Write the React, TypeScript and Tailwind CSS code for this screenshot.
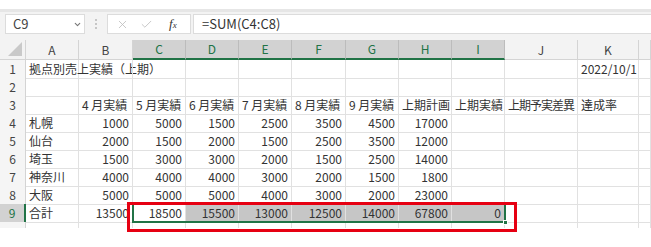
import { ChevronDown, Check, X } from "lucide-react";

const font = { fontFamily: '"Noto Sans CJK JP", "Liberation Sans", sans-serif' };

const cols = ["A", "B", "C", "D", "E", "F", "G", "H", "I", "J", "K", ""];
const selectedCols = ["C", "D", "E", "F", "G", "H", "I"];

type Row = { n: number; cells: (string | number)[] };

const rows: Row[] = [
  { n: 1, cells: ["拠点別売上実績（上期）", "", "", "", "", "", "", "", "", "", "2022/10/1", ""] },
  { n: 2, cells: ["", "", "", "", "", "", "", "", "", "", "", ""] },
  {
    n: 3,
    cells: ["", "4 月実績", "5 月実績", "6 月実績", "7 月実績", "8 月実績", "9 月実績", "上期計画", "上期実績", "上期予実差異", "達成率", ""],
  },
  { n: 4, cells: ["札幌", 1000, 5000, 1500, 2500, 3500, 4500, 17000, "", "", "", ""] },
  { n: 5, cells: ["仙台", 2000, 1500, 2000, 1500, 2500, 3500, 12000, "", "", "", ""] },
  { n: 6, cells: ["埼玉", 1500, 3000, 3000, 2000, 1500, 2500, 14000, "", "", "", ""] },
  { n: 7, cells: ["神奈川", 4000, 4000, 4000, 3000, 2000, 1500, 1800, "", "", "", ""] },
  { n: 8, cells: ["大阪", 5000, 5000, 5000, 4000, 3000, 2000, 23000, "", "", "", ""] },
  { n: 9, cells: ["合計", 13500, 18500, 15500, 13000, 12500, 14000, 67800, 0, "", "", ""] },
];

const gridCols = "grid-cols-[26px_53px_54px_53px_53px_53px_54px_53px_53px_53px_73px_61px_1fr]";

export default function App() {
  return (
    <div className="w-[651px] h-[247px] bg-white overflow-hidden text-[#333]" style={font}>
      {/* formula bar */}
      <div className="h-[9px] bg-white" />
      <div className="h-[3px] bg-[#e6e6e6]" />
      <div className="bg-[#f3f3f3] h-[28px] pt-[2px] flex items-start">
        <div className="ml-[5px] w-[80px] h-[20px] bg-white border border-[#dcdcdc] flex items-center pl-[7px] pr-[2px] text-[13px] text-[#444]">
          <span className="flex-1">C9</span>
          <ChevronDown className="w-[9px] h-[9px] text-[#777]" strokeWidth={3} />
        </div>
        <div className="w-[22px] h-[20px] flex flex-col items-center justify-center gap-[2px]">
          <span className="w-[2px] h-[2px] bg-[#c6c6c6]" />
          <span className="w-[2px] h-[2px] bg-[#c6c6c6]" />
          <span className="w-[2px] h-[2px] bg-[#c6c6c6]" />
        </div>
        <div className="w-[84px] h-[20px] bg-white border border-[#dcdcdc] flex items-center pl-[8px] gap-[11px] text-[#bdbdbd]">
          <X className="w-[13px] h-[13px]" strokeWidth={1.5} />
          <Check className="w-[13px] h-[13px]" strokeWidth={1.5} />
          <span className="ml-[5px] text-[#333] text-[13px] italic" style={{ fontFamily: '"Liberation Serif", serif' }}>
            f<span className="text-[9px]">x</span>
          </span>
        </div>
        <div className="ml-[2px] flex-1 h-[20px] bg-white border border-[#dcdcdc] border-r-0 flex items-center pl-[8px] text-[13px] text-[#333]">
          =SUM(C4:C8)
        </div>
      </div>

      {/* sheet */}
      <div className="relative">
        <div className={`grid ${gridCols} h-[20px] bg-[#f3f3f3]`}>
          <div className="relative border-r border-b border-[#d4d4d4]">
            <div
              className="absolute right-[3px] bottom-[3px] w-[14px] h-[14px] bg-[#c9c9c9]"
              style={{ clipPath: "polygon(100% 0, 100% 100%, 0 100%)" }}
            />
          </div>
          {cols.map((c, i) => {
            const sel = selectedCols.includes(c);
            return (
              <div
                key={i}
                className={
                  sel
                    ? "bg-[#d2d2d2] border-r border-[#bcbcbc] border-b-2 border-b-[#217346] text-[#217346] flex items-center justify-center text-[12px]"
                    : "border-r border-b border-[#d4d4d4] text-[#444] flex items-center justify-center text-[12px]"
                }
              >
                {c}
              </div>
            );
          })}
        </div>

        {rows.map((r) => (
          <div key={r.n} className={`grid ${gridCols} h-[18px]`}>
            <div
              className={
                r.n === 9
                  ? "bg-[#d2d2d2] border-r-2 border-r-[#217346] border-b border-[#bcbcbc] text-[#217346] flex items-center justify-center text-[12px]"
                  : "bg-[#f5f5f5] border-r border-b border-[#d4d4d4] text-[#444] flex items-center justify-center text-[12px]"
              }
            >
              {r.n}
            </div>
            {r.cells.map((v, i) => {
              const isNum = typeof v === "number";
              const sel9 = r.n === 9 && i >= 3 && i <= 8;
              const tight = v === "上期予実差異";
              return (
                <div
                  key={i}
                  className={
                    (sel9 ? "bg-[#c6c6c6] " : "") +
                    (tight ? "tracking-[-1px] " : "") +
                    "border-r border-b border-[#e1e1e1] flex items-center text-[12px] leading-none whitespace-nowrap overflow-visible " +
                    (isNum ? "justify-end pr-[3px]" : "pl-[3px]")
                  }
                >
                  {v === "" ? null : String(v)}
                </div>
              );
            })}
          </div>
        ))}

        <div className={`grid ${gridCols} h-[6px]`}>
          <div className="bg-[#f5f5f5] border-r border-[#d4d4d4]" />
          {cols.map((_, i) => (
            <div key={i} className="border-r border-[#e1e1e1]" />
          ))}
        </div>

        {/* selection range C9:I9 */}
        <div className="absolute left-[132px] top-[163px] w-[374px] h-[20px] border-2 border-[#217346] pointer-events-none">
          <div className="absolute -right-[4px] -bottom-[4px] w-[5px] h-[5px] bg-[#217346] border border-white" />
        </div>
        {/* red highlight */}
        <div className="absolute left-[127px] top-[162px] w-[390px] h-[30px] border-[3px] border-[#e60012] pointer-events-none" />
      </div>
    </div>
  );
}
